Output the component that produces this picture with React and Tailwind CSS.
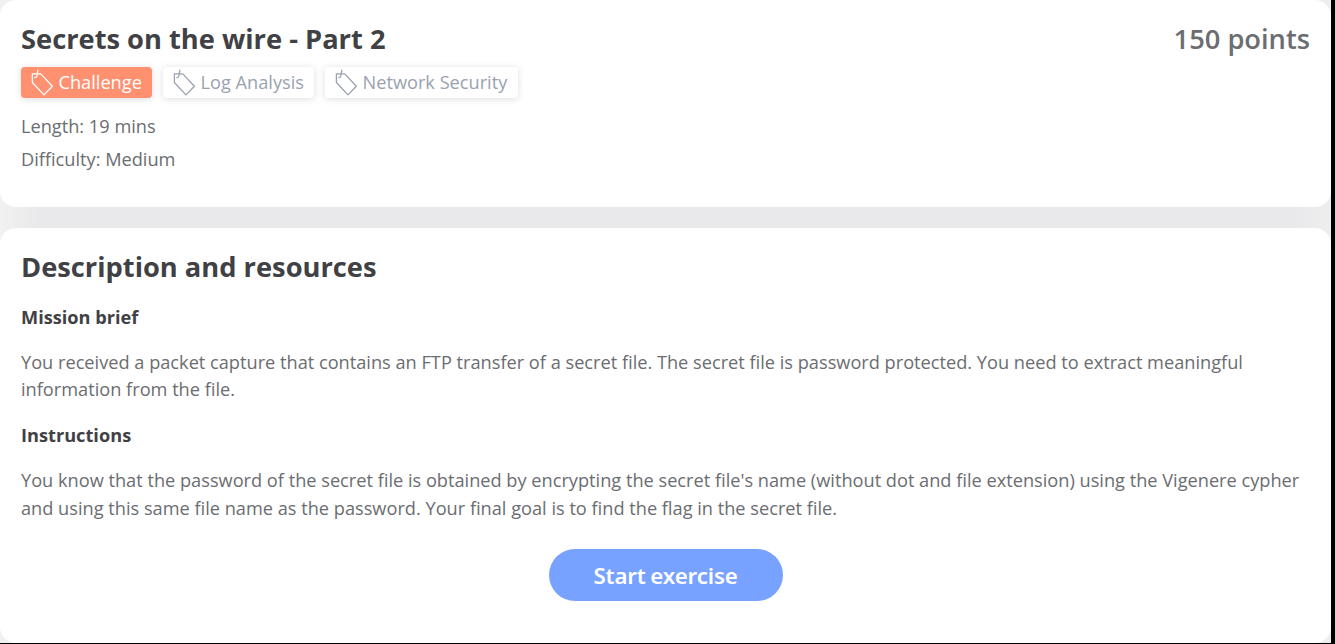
function TagIcon() {
  return (
    <svg
      className="h-[28px] w-[24px] shrink-0"
      viewBox="0 0 24 28"
      fill="none"
      stroke="currentColor"
      strokeWidth="1.3"
      strokeLinejoin="round"
      strokeLinecap="round"
    >
      <path d="M2.4 4.9V13.5L14 25.9L22.4 17.3L10.8 4.9Z" />
      <path d="M7.9 1.2L6.9 6.9Q6.4 8.8 4.8 8.7" />
    </svg>
  );
}

function Tag({ label, className }) {
  return (
    <span
      className={`flex h-[31px] items-center gap-[4.5px] rounded-[4px] pl-[9px] text-[18.19px] leading-[31px] whitespace-nowrap shadow-[0_1px_7px_rgba(60,65,80,0.18)] ${className}`}
    >
      <TagIcon />
      <span>{label}</span>
    </span>
  );
}

function Section({ heading, className, children }) {
  return (
    <section>
      <h3 className="text-[18.19px] leading-[28px] font-bold text-[#3f4144]">{heading}</h3>
      <p className={`text-[18.19px] text-[#6b6d71] ${className}`}>{children}</p>
    </section>
  );
}

export default function App() {
  return (
    <div className="h-[644px] w-full overflow-hidden bg-black pr-[4px] pb-px font-['Open_Sans',sans-serif]">
      <div className="flex h-[643px] flex-col gap-[21px] bg-[linear-gradient(90deg,#f1f1f1_0px,#e9e9eb_40px,#e9e9eb_1290px,#eeeeef_100%)]">
        <header className="h-[207px] shrink-0 rounded-[16px] bg-white px-[21px] pt-[19px]">
          <div className="flex h-[40px] items-center justify-between text-[27.28px] leading-[40px]">
            <h1 className="font-bold text-[#3f4144]">Secrets on the wire - Part 2</h1>
            <span className="font-semibold text-[#6b6d71]">150 points</span>
          </div>
          <div className="mt-[8px] flex gap-[11px]">
            <Tag label="Challenge" className="w-[131px] bg-[#ff9070] text-white" />
            <Tag label="Log Analysis" className="w-[151px] bg-white text-[#9aa2af]" />
            <Tag label="Network Security" className="w-[193px] bg-white text-[#9aa2af]" />
          </div>
          <div className="mt-[12px] text-[18.19px] leading-[33px] text-[#6b6d71]">
            <p>Length: 19 mins</p>
            <p>Difficulty: Medium</p>
          </div>
        </header>
        <main className="flex h-[415px] shrink-0 flex-col rounded-[16px] bg-white px-[21px] pt-[19px]">
          <h2 className="text-[27.28px] leading-[40px] font-bold text-[#3f4144]">Description and resources</h2>
          <div className="mt-[16px] flex flex-col gap-[18px]">
            <Section heading="Mission brief" className="mt-[18px] leading-[27px]">
              You received a packet capture that contains an FTP transfer of a secret file. The secret file is password
              protected. You need to extract meaningful
              <br />
              information from the file.
            </Section>
            <Section heading="Instructions" className="mt-[17px] leading-[28px]">
              You know that the password of the secret file is obtained by encrypting the secret file's name (without dot
              and file extension) using the Vigenere cypher
              <br />
              and using this same file name as the password. Your final goal is to find the flag in the secret file.
            </Section>
          </div>
          <button className="mt-[27px] h-[52px] w-[234px] self-center rounded-full bg-[#77a2ff] pt-[1px] font-['Noto_Sans',sans-serif] text-[22.3px] font-semibold tracking-[-0.15px] [word-spacing:-1px] text-white">
            Start exercise
          </button>
        </main>
      </div>
    </div>
  );
}
